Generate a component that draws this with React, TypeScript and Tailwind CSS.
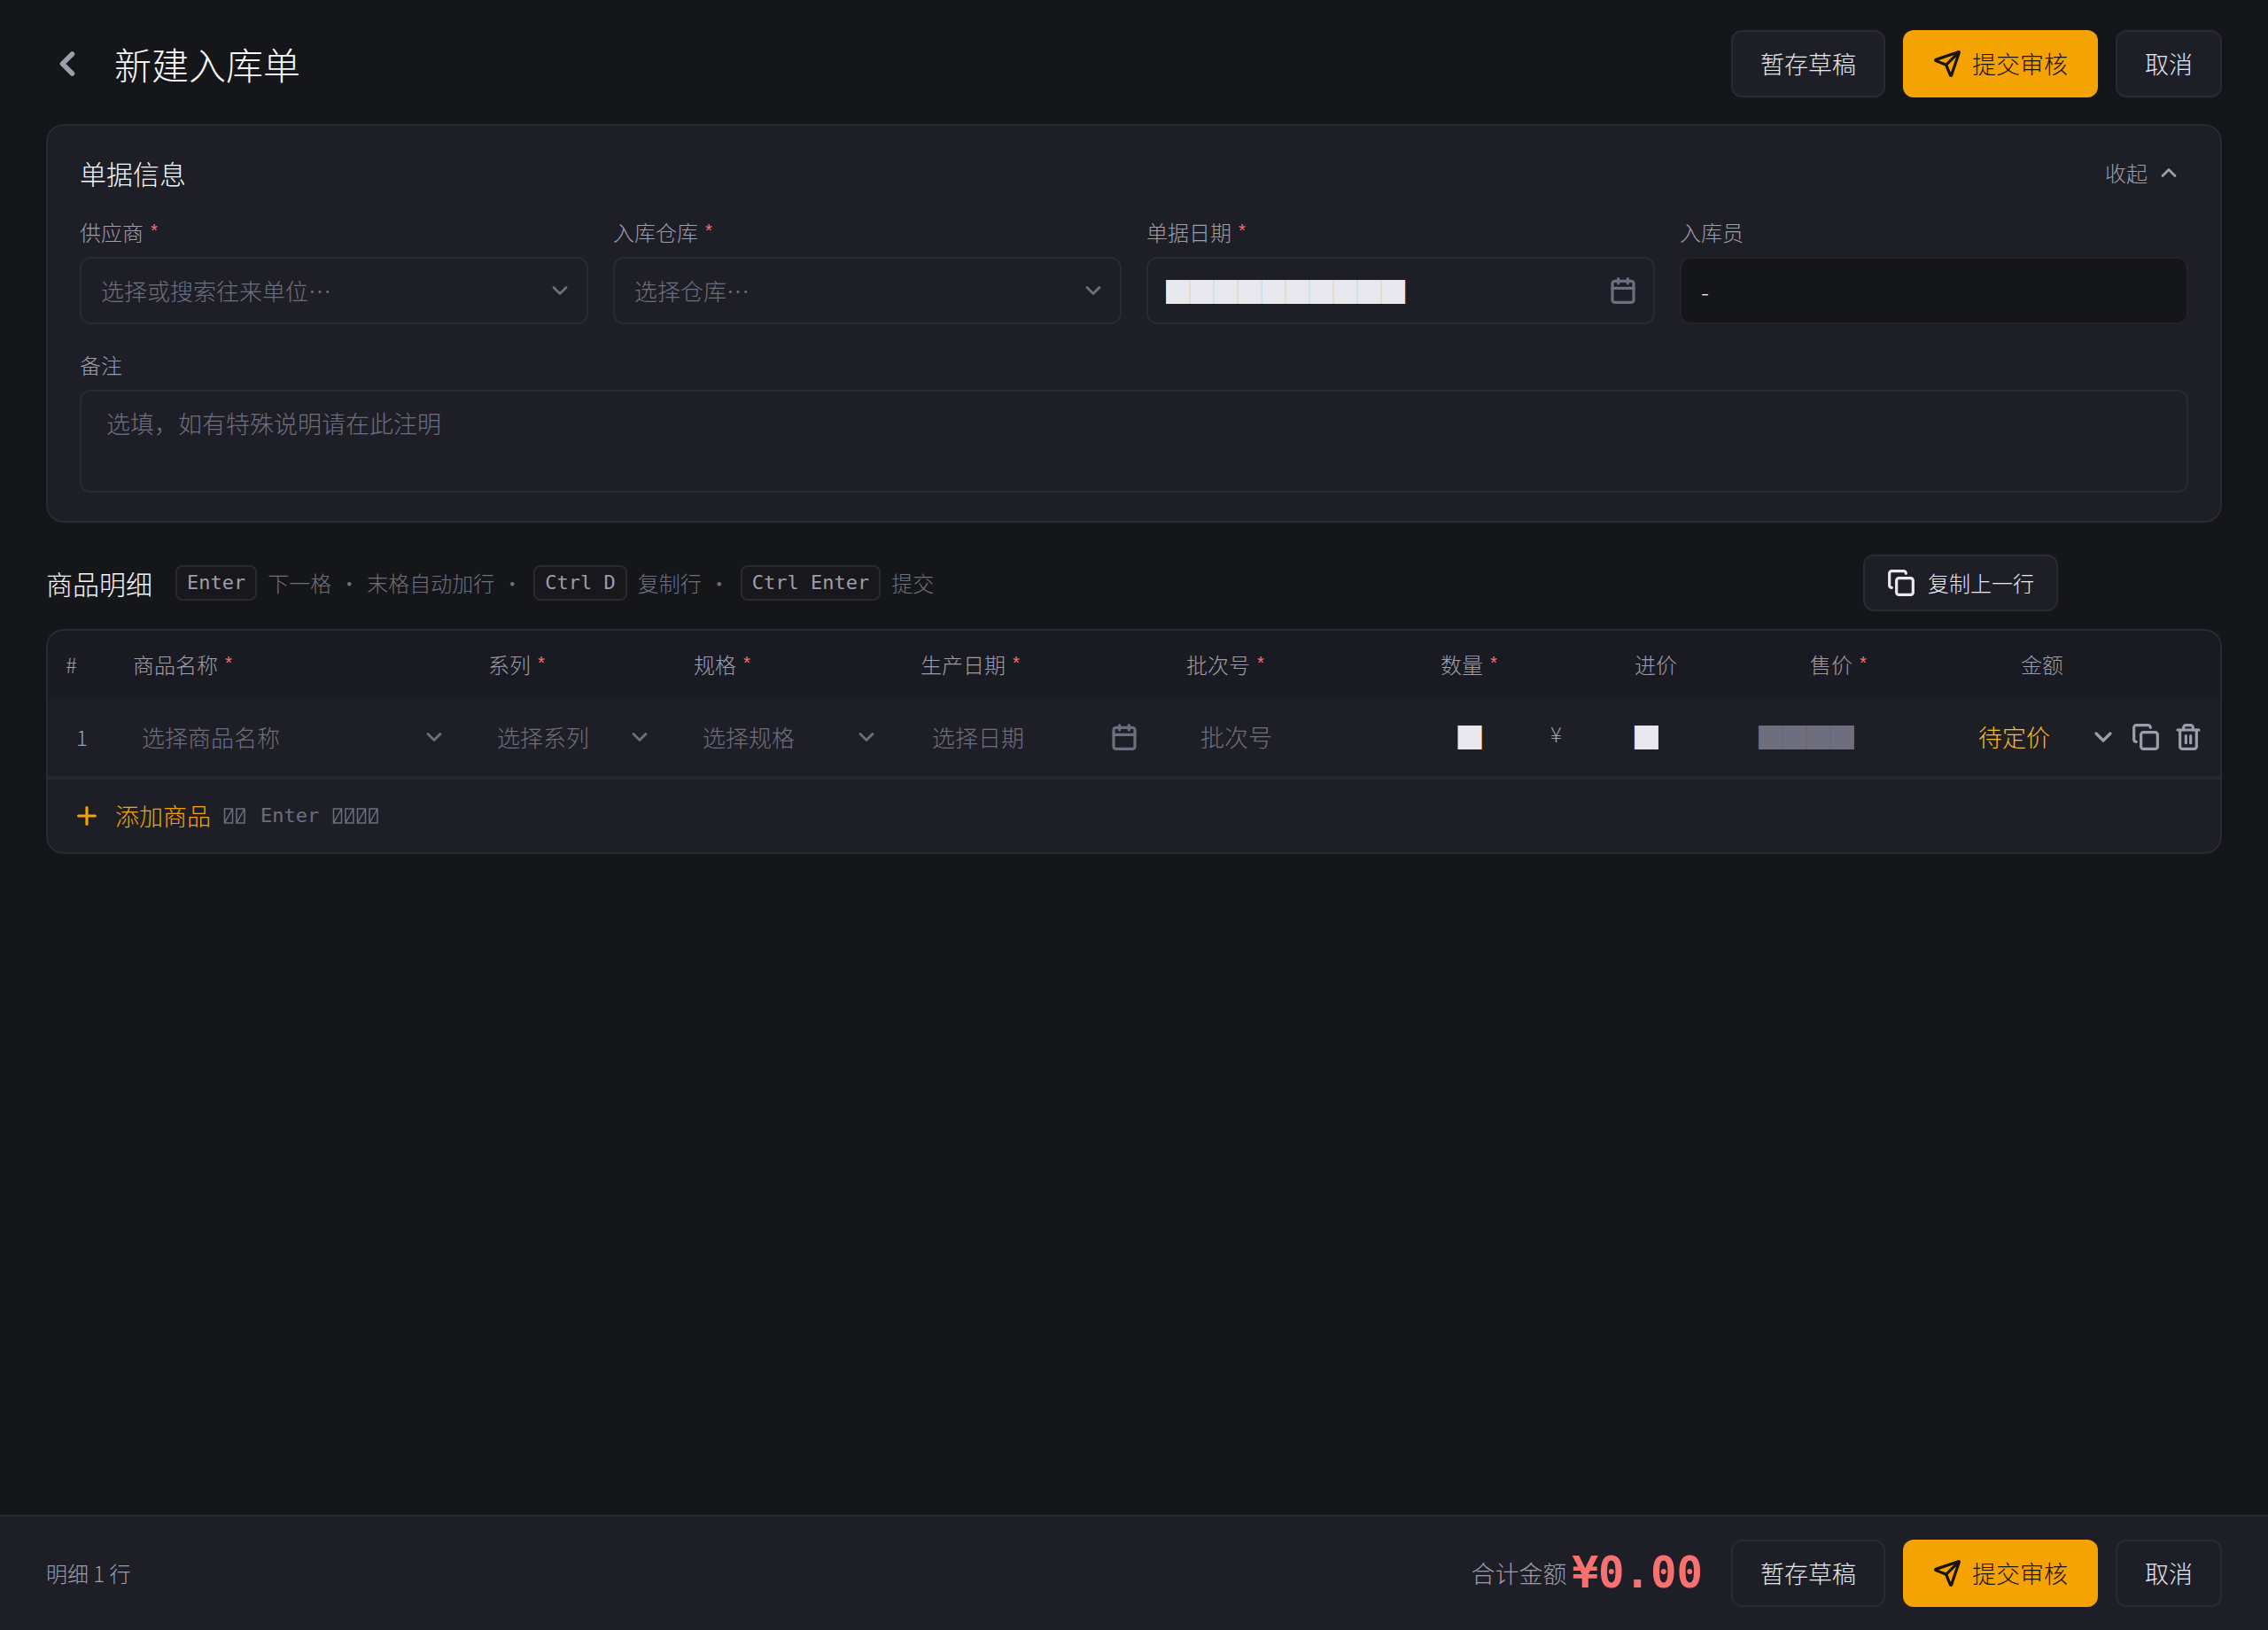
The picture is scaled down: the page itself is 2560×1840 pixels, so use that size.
import { useState } from "react";
import type { ReactNode } from "react";
import { Calendar, ChevronDown, ChevronLeft, ChevronUp, Copy, Plus, Trash2 } from "lucide-react";

const field = "h-[76px] w-full rounded-xl border-2 border-[#2a2a34] bg-[#1e1e26] outline-none";
const stroke = 2.4;

function Star() {
  return <span className="ml-1.5 inline-block -translate-y-1 font-mono text-[20px] leading-none font-medium text-[#f87171]">*</span>;
}

function PlaneIcon() {
  return (
    <svg viewBox="0 0 24 24" className="size-8" fill="none" stroke="currentColor" strokeWidth={stroke} strokeLinecap="round" strokeLinejoin="round" aria-hidden="true">
      <path d="M14.536 21.686a.5.5 0 0 0 .937-.024l6.5-19a.496.496 0 0 0-.635-.635l-19 6.5a.5.5 0 0 0-.024.937l7.93 3.18a2 2 0 0 1 1.112 1.11z" />
      <path d="m21.854 2.147-10.94 10.939" />
    </svg>
  );
}

function MissingGlyphs({ count }: { count: number }) {
  const width = (count * 27) / 2;
  return (
    <svg width={width} height="18" viewBox={`0 0 ${width} 18`} fill="none" stroke="currentColor" strokeWidth="1.5" aria-hidden="true">
      {Array.from({ length: count }, (_, i) => (
        <path key={i} d={`M${i * 13.5 + 1.5} 1h9v16h-9zM${i * 13.5 + 1.5} 17l9-16`} />
      ))}
    </svg>
  );
}

function Actions() {
  return (
    <div className="flex gap-5">
      <button type="button" className="h-[76px] rounded-xl border-2 border-[#2a2a34] bg-[#1e1e26] px-[31px] text-[#e8e8ee]">暂存草稿</button>
      <button type="button" className="flex h-[76px] items-center gap-3 rounded-xl bg-[#f5a302] px-[34px] text-[#17140a]">
        <PlaneIcon />
        提交审核
      </button>
      <button type="button" className="h-[76px] rounded-xl border-2 border-[#2a2a34] bg-[#1e1e26] px-[31px] text-[#e8e8ee]">取消</button>
    </div>
  );
}

function Label({ id, required, children }: { id: string; required?: boolean; children: ReactNode }) {
  return (
    <label htmlFor={id} className="mb-2.5 block h-9 text-[24px] leading-9 text-[#9d9dab]">
      {children}
      {required && <Star />}
    </label>
  );
}

function FormSelect({ id, placeholder }: { id: string; placeholder: string }) {
  return (
    <div className="relative">
      <select id={id} className={`${field} appearance-none px-[22px] text-[26px] text-[#6e6e7e]`}>
        <option>{placeholder}</option>
      </select>
      <ChevronDown strokeWidth={stroke} className="pointer-events-none absolute top-6 right-[18px] size-7 text-[#6e6e7e]" />
    </div>
  );
}

function RowSelect({ label, placeholder }: { label: string; placeholder: string }) {
  return (
    <div className="relative mr-[27px] ml-[30px]">
      <select aria-label={label} className="w-full appearance-none bg-transparent text-[26px] text-[#6e6e7e] outline-none">
        <option>{placeholder}</option>
      </select>
      <ChevronDown strokeWidth={stroke} className="pointer-events-none absolute top-1.5 right-0 size-7 text-[#6e6e7e]" />
    </div>
  );
}

function Kbd({ children }: { children: ReactNode }) {
  return (
    <kbd className="h-10 rounded-lg border-2 border-[#2a2a34] bg-[#17171c] px-[11px] text-[22px] leading-9 font-medium text-[#9d9dab] [font-family:'DejaVu_Sans_Mono',monospace]">
      {children}
    </kbd>
  );
}

function Dot() {
  return <span className="flex w-4 justify-center">•</span>;
}

const columns = [
  { name: "#", required: false, width: "w-[76px]", align: "text-left" },
  { name: "商品名称", required: true, width: "w-auto", align: "text-left" },
  { name: "系列", required: true, width: "w-[232px]", align: "text-left" },
  { name: "规格", required: true, width: "w-[256px]", align: "text-left" },
  { name: "生产日期", required: true, width: "w-[300px]", align: "text-left" },
  { name: "批次号", required: true, width: "w-[286px]", align: "text-left" },
  { name: "数量", required: true, width: "w-[108px]", align: "text-center" },
  { name: "进价", required: false, width: "w-[200px]", align: "text-right" },
  { name: "售价", required: true, width: "w-[216px]", align: "text-right" },
  { name: "金额", required: false, width: "w-[220px]", align: "text-right" },
];

export default function App() {
  const [open, setOpen] = useState(true);
  const [date, setDate] = useState("██████████");
  const [quantity, setQuantity] = useState("█");
  const [cost, setCost] = useState("█");

  return (
    <div className="flex min-h-screen flex-col bg-[#15161a] text-[27px] leading-10 font-light text-[#e8e8ee] [font-family:'Noto_Sans_CJK_SC',sans-serif]">
      <header className="flex h-[140px] items-start justify-between px-[52px] pt-[34px]">
        <div className="flex h-[76px] items-center">
          <button type="button" aria-label="返回" className="mr-[29px] flex size-12 items-center justify-center text-[#9d9dab]">
            <ChevronLeft strokeWidth={3} className="size-11" />
          </button>
          <h1 className="text-[42px] leading-[60px] text-[#f8f8fb]">新建入库单</h1>
        </div>
        <Actions />
      </header>

      <main className="flex-1 px-[52px]">
        <section className="rounded-[20px] border-2 border-[#2a2a34] bg-[#1e1e26] px-9 pt-[29px] pb-8">
          <div className="flex h-12 items-center justify-between">
            <h2 className="text-[30px] text-[#f8f8fb]">单据信息</h2>
            <button type="button" onClick={() => setOpen(!open)} className="flex items-center gap-2.5 pr-2 text-[24px] text-[#9d9dab]">
              收起
              <ChevronUp strokeWidth={stroke} className="size-7" />
            </button>
          </div>
          {open && (
            <>
              <div className="mt-[25px] grid grid-cols-4 gap-7">
                <div>
                  <Label id="supplier" required>供应商</Label>
                  <FormSelect id="supplier" placeholder="选择或搜索往来单位…" />
                </div>
                <div>
                  <Label id="warehouse" required>入库仓库</Label>
                  <FormSelect id="warehouse" placeholder="选择仓库…" />
                </div>
                <div>
                  <Label id="date" required>单据日期</Label>
                  <div className="relative">
                    <input id="date" value={date} onChange={(e) => setDate(e.target.value)} className={`${field} px-5 text-[#e8e8ee]`} />
                    <Calendar strokeWidth={stroke} className="pointer-events-none absolute top-[22px] right-5 size-8 text-[#6e6e7e]" />
                  </div>
                </div>
                <div>
                  <Label id="operator">入库员</Label>
                  <input id="operator" readOnly value="-" className="h-[76px] w-full rounded-xl border-2 border-[#222228] bg-[#15161a] px-[22px] outline-none" />
                </div>
              </div>
              <div className="mt-7">
                <Label id="remark">备注</Label>
                <textarea id="remark" placeholder="选填，如有特殊说明请在此注明" className="block h-[116px] w-full resize-none rounded-xl border-2 border-[#2a2a34] bg-transparent px-7 py-4 outline-none placeholder:text-[#6e6e7e]" />
              </div>
            </>
          )}
        </section>

        <div className="mt-9 mb-5 flex h-16 items-center">
          <h2 className="mr-[26px] text-[30px] text-[#f8f8fb]">商品明细</h2>
          <div className="flex items-center gap-3 text-[24px] text-[#6e6e7e]">
            <Kbd>Enter</Kbd>
            <span>下一格</span>
            <Dot />
            <span>末格自动加行</span>
            <Dot />
            <span className="ml-1 flex items-center"><Kbd>Ctrl D</Kbd></span>
            <span>复制行</span>
            <Dot />
            <span className="ml-1 flex items-center"><Kbd>Ctrl Enter</Kbd></span>
            <span>提交</span>
          </div>
          <button type="button" className="mr-[185px] ml-auto flex h-16 items-center gap-3.5 rounded-xl border-2 border-[#2a2a34] bg-[#1e1e26] px-[25px] text-[24px]">
            <Copy strokeWidth={stroke} className="size-8" />
            复制上一行
          </button>
        </div>

        <section className="overflow-hidden rounded-[20px] border-2 border-[#2a2a34] bg-[#1e1e26]">
          <table className="w-full table-fixed">
            <thead>
              <tr className="h-[76px] bg-[#1a1a22] text-[24px] text-[#9d9dab]">
                {columns.map((c) => (
                  <th key={c.name} scope="col" className={`${c.width} ${c.align} px-5 font-light`}>
                    {c.name}
                    {c.required && <Star />}
                  </th>
                ))}
                <th scope="col" aria-label="操作" className="w-[157px]" />
              </tr>
            </thead>
            <tbody>
              <tr className="h-[90px] border-b-4 border-[#262630]">
                <td className="pl-8 text-[24px] text-[#9d9dab]">1</td>
                <td><RowSelect label="商品名称" placeholder="选择商品名称" /></td>
                <td><RowSelect label="系列" placeholder="选择系列" /></td>
                <td><RowSelect label="规格" placeholder="选择规格" /></td>
                <td>
                  <div className="flex items-center pr-[34px] pl-[33px]">
                    <input aria-label="生产日期" placeholder="选择日期" className="w-full min-w-0 text-[26px] outline-none placeholder:text-[#6e6e7e]" />
                    <Calendar strokeWidth={stroke} className="size-8 shrink-0 text-[#6e6e7e]" />
                  </div>
                </td>
                <td className="pl-9"><input aria-label="批次号" placeholder="批次号" className="w-full outline-none placeholder:text-[#6e6e7e]" /></td>
                <td><input aria-label="数量" value={quantity} onChange={(e) => setQuantity(e.target.value)} className="w-full text-center outline-none" /></td>
                <td>
                  <div className="flex items-center pr-[41px] pl-[37px]">
                    <span className="self-start text-[24px] leading-8 text-[#9d9dab]">¥</span>
                    <input aria-label="进价" value={cost} onChange={(e) => setCost(e.target.value)} className="w-full min-w-0 text-right outline-none" />
                  </div>
                </td>
                <td className="pr-9"><input aria-label="售价" placeholder="████" className="w-full text-right outline-none placeholder:text-[#6e6e7e]" /></td>
                <td className="pr-[35px] text-right text-[#fbbf24]">待定价</td>
                <td>
                  <div className="flex items-center justify-end gap-4 pr-5 text-[#9d9dab]">
                    <button type="button" aria-label="展开"><ChevronDown strokeWidth={stroke} className="size-8" /></button>
                    <button type="button" aria-label="复制行"><Copy strokeWidth={stroke} className="size-8" /></button>
                    <button type="button" aria-label="删除行"><Trash2 strokeWidth={stroke} className="size-8" /></button>
                  </div>
                </td>
              </tr>
            </tbody>
          </table>
          <button type="button" className="flex h-[82px] w-full items-center px-7 text-[#f5a302]">
            <Plus strokeWidth={stroke} className="mr-4 size-8" />
            添加商品
            <span className="ml-3.5 flex items-center gap-[15px] text-[22px] font-normal text-[#6e6e7e] [font-family:'DejaVu_Sans_Mono',monospace]">
              <MissingGlyphs count={2} />
              Enter
              <MissingGlyphs count={4} />
            </span>
          </button>
        </section>
      </main>

      <footer className="flex h-[130px] items-center justify-between border-t-2 border-[#2a2a34] bg-[#1e1e26] px-[52px]">
        <span className="text-[24px] text-[#9d9dab]">明细 1 行</span>
        <div className="flex items-center">
          <span className="text-[#9d9dab]">合计金额</span>
          <strong className="mr-8 ml-1.5 text-[49px] font-bold text-[#f87171] [font-family:'DejaVu_Sans_Mono',monospace]">¥0.00</strong>
          <Actions />
        </div>
      </footer>
    </div>
  );
}
